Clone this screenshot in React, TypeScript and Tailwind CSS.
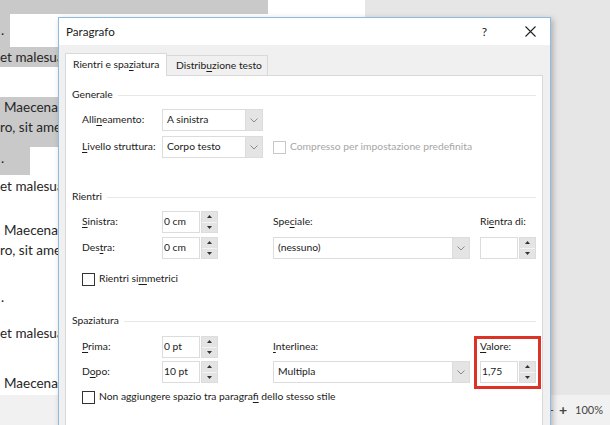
import React from "react";

const UI = { fontFamily: 'Lato, "Open Sans", sans-serif' };
const DOC = { fontFamily: 'Lato, "Open Sans", sans-serif' };

function U({ children }: { children: React.ReactNode }) {
  return <span className="underline decoration-1 underline-offset-[2px]">{children}</span>;
}

function Chevron() {
  return (
    <svg width="8" height="5" viewBox="0 0 8 5">
      <path d="M0.5 0.5 L4 4 L7.5 0.5" fill="none" stroke="#8a8a8a" strokeWidth="1" />
    </svg>
  );
}

function Select({ value, w }: { value: string; w: string }) {
  return (
    <div className={"flex h-[22px] border border-[#dcdcdc] bg-white " + w}>
      <div className="flex flex-1 items-center whitespace-nowrap pl-[4px]">{value}</div>
      <div className="flex w-[17px] items-center justify-center border-l border-[#dcdcdc] bg-[#e4e4e4]">
        <Chevron />
      </div>
    </div>
  );
}

function Spin({ value, w }: { value: string; w: string }) {
  return (
    <div className={"flex h-[22px] " + w}>
      <div className="flex flex-1 items-center whitespace-nowrap border border-[#dcdcdc] bg-white pl-[1px]">{value}</div>
      <div className="ml-[1px] flex w-[17px] flex-col border border-[#dcdcdc] bg-[#e4e4e4]">
        <div className="flex flex-1 items-center justify-center border-b border-[#f4f4f4]">
          <svg width="5" height="3" viewBox="0 0 5 3">
            <path d="M0 3 L2.5 0 L5 3 Z" fill="#333" />
          </svg>
        </div>
        <div className="flex flex-1 items-center justify-center">
          <svg width="5" height="3" viewBox="0 0 5 3">
            <path d="M0 0 L2.5 3 L5 0 Z" fill="#333" />
          </svg>
        </div>
      </div>
    </div>
  );
}

function Check({ disabled }: { disabled?: boolean }) {
  return (
    <div
      className={
        "h-[13px] w-[13px] shrink-0 border bg-white " + (disabled ? "border-[#c8c8c8]" : "border-[#333333]")
      }
    />
  );
}

function GroupTitle({ children }: { children: React.ReactNode }) {
  return (
    <div className="flex h-[16px] items-center pl-[6px] pr-[6px]">
      <span className="whitespace-nowrap">{children}</span>
      <div className="ml-[5px] h-px flex-1 bg-[#e8e8e8]" />
    </div>
  );
}

function Label({ children, w }: { children: React.ReactNode; w?: string }) {
  return <div className={"flex h-[22px] shrink-0 items-center whitespace-nowrap " + (w ?? "")}>{children}</div>;
}

export default function App() {
  return (
    <div className="relative h-[425px] w-[610px] overflow-hidden bg-[#e6e6e6]">
      <div className="flex h-[395px]">
        {/* document page */}
        <div className="h-full w-[365px] whitespace-nowrap bg-white text-[13.5px] leading-[16px] text-[#262626]" style={DOC}>
          <div className="h-[14px] w-[268px] bg-[#c9c9c9]" />
          <div className="flex h-[33px]">
            <div className="flex w-[10px] items-end bg-[#c9c9c9] pb-[9px] pl-[1px]">.</div>
          </div>
          <div className="flex h-[20px] w-[268px] items-center bg-[#c9c9c9]">et malesuada. Nunc</div>
          <div className="h-[30px]" />
          <div className="flex h-[20px] w-[268px] items-center bg-[#c9c9c9] pl-[4px]">Maecenas porttitor</div>
          <div className="h-[30px] w-[268px] bg-[#c9c9c9] pt-[2px]">ro, sit amet commodo</div>
          <div className="flex h-[28px] w-[30px] items-start bg-[#c9c9c9] pt-[3px] pl-[1px]">.</div>
          <div className="flex h-[22px] items-center">et malesuada. Nunc</div>
          <div className="h-[23px]" />
          <div className="flex h-[20px] items-center pl-[4px]">Maecenas porttitor</div>
          <div className="flex h-[19px] items-center">ro, sit amet commodo</div>
          <div className="h-[28px]" />
          <div className="flex h-[20px] items-center pl-[1px]">.</div>
          <div className="h-[16px]" />
          <div className="flex h-[20px] items-center">et malesuada. Nunc</div>
          <div className="h-[30px]" />
          <div className="flex h-[20px] items-center pl-[4px]">Maecenas porttitor</div>
        </div>
        <div className="flex-1 bg-[#e6e6e6]" />
      </div>
      {/* status bar */}
      <div
        className="flex h-[30px] items-center justify-end bg-[#f1f1f1] pr-[7px] text-[11px] text-[#444]"
        style={UI}
      >
        <span className="mr-[5px]">-</span>
        <span className="mr-[8px] text-[14px] font-bold leading-none">+</span>
        <span>100%</span>
      </div>

      {/* dialog */}
      <div
        className="absolute left-[58px] top-[17px] flex h-[420px] w-[493px] flex-col border border-[#8fbbe0] bg-[#f0f0f0] text-[10.3px] text-[#1b1b1b] shadow-[2px_2px_6px_rgba(0,0,0,0.25)]"
        style={UI}
      >
        <div className="flex h-[27px] items-center bg-white pl-[7px] pr-[14px]">
          <span className="text-[11.6px]">Paragrafo</span>
          <span className="ml-auto mr-[38px] text-[12px]">?</span>
          <svg width="11" height="11" viewBox="0 0 11 11">
            <path d="M0.5 0.5 L10.5 10.5 M10.5 0.5 L0.5 10.5" stroke="#222" strokeWidth="1.1" />
          </svg>
        </div>
        <div className="flex flex-1 flex-col pl-[6px] pr-[7px] pt-[8px]">
          <div className="flex items-end whitespace-nowrap">
            <div className="relative z-10 -mb-px flex h-[23px] w-[102px] items-center border border-b-0 border-[#d9d9d9] bg-white pl-[7px]">
              Rientri e spa<U>z</U>iatura
            </div>
            <div className="flex h-[20px] w-[101px] items-center border border-b-0 border-l-0 border-[#d9d9d9] bg-[#f0f0f0] pl-[9px]">
              Distrib<U>u</U>zione testo
            </div>
          </div>
          <div className="flex-1 border border-[#d9d9d9] bg-white">
            {/* Generale */}
            <div className="mt-[11px]">
              <GroupTitle>Generale</GroupTitle>
            </div>
            <div className="mt-[6px] flex items-center pl-[16px]">
              <Label w="w-[80px]">
                <span>
                  Alli<U>n</U>eamento:
                </span>
              </Label>
              <Select value="A sinistra" w="w-[101px]" />
            </div>
            <div className="mt-[5px] flex items-center pl-[16px]">
              <Label w="w-[80px]">
                <span>
                  <U>L</U>ivello struttura:
                </span>
              </Label>
              <Select value="Corpo testo" w="w-[101px]" />
              <div className="ml-[10px] flex items-center whitespace-nowrap">
                <Check disabled />
                <span className="ml-[4px] text-[#a6a6a6]">Compresso per impostazione predefinita</span>
              </div>
            </div>

            {/* Rientri */}
            <div className="mt-[31px]">
              <GroupTitle>Rientri</GroupTitle>
            </div>
            <div className="mt-[6px] flex pl-[16px]">
              <div className="flex flex-col gap-[4px]">
                <div className="flex">
                  <Label w="w-[80px]">
                    <span>
                      <U>S</U>inistra:
                    </span>
                  </Label>
                  <Spin value="0 cm" w="w-[56px]" />
                </div>
                <div className="flex">
                  <Label w="w-[80px]">
                    <span>
                      Des<U>t</U>ra:
                    </span>
                  </Label>
                  <Spin value="0 cm" w="w-[56px]" />
                </div>
              </div>
              <div className="ml-[55px] flex w-[197px] flex-col gap-[4px]">
                <Label>
                  <span>
                    Spe<U>c</U>iale:
                  </span>
                </Label>
                <Select value="(nessuno)" w="w-[197px]" />
              </div>
              <div className="ml-[10px] flex w-[56px] flex-col gap-[4px]">
                <Label>
                  <span>
                    Ri<U>e</U>ntra di:
                  </span>
                </Label>
                <Spin value="" w="w-[56px]" />
              </div>
            </div>
            <div className="mt-[13px] flex h-[14px] items-center whitespace-nowrap pl-[16px]">
              <Check />
              <span className="ml-[4px]">
                Rientri si<U>m</U>metrici
              </span>
            </div>

            {/* Spaziatura */}
            <div className="mt-[27px]">
              <GroupTitle>Spaziatura</GroupTitle>
            </div>
            <div className="mt-[7px] flex pl-[16px]">
              <div className="flex flex-col gap-[3px]">
                <div className="flex">
                  <Label w="w-[80px]">
                    <span>
                      <U>P</U>rima:
                    </span>
                  </Label>
                  <Spin value="0 pt" w="w-[56px]" />
                </div>
                <div className="flex">
                  <Label w="w-[80px]">
                    <span>
                      D<U>o</U>po:
                    </span>
                  </Label>
                  <Spin value="10 pt" w="w-[56px]" />
                </div>
              </div>
              <div className="ml-[55px] flex w-[197px] flex-col gap-[3px]">
                <Label>
                  <span>
                    <U>I</U>nterlinea:
                  </span>
                </Label>
                <Select value="Multipla" w="w-[197px]" />
              </div>
              <div className="relative ml-[10px] flex w-[56px] flex-col gap-[3px]">
                <Label>
                  <span>
                    <U>V</U>alore:
                  </span>
                </Label>
                <Spin value="1,75" w="w-[56px]" />
                <div className="absolute -left-[6px] top-0 h-[53px] w-[67px] border-[3px] border-[#dc3328]" />
              </div>
            </div>
            <div className="mt-[7px] flex h-[14px] items-center whitespace-nowrap pl-[16px]">
              <Check />
              <span className="ml-[4px]">
                Non aggiungere spazio tra paragra<U>f</U>i dello stesso stile
              </span>
            </div>
          </div>
        </div>
      </div>
    </div>
  );
}
